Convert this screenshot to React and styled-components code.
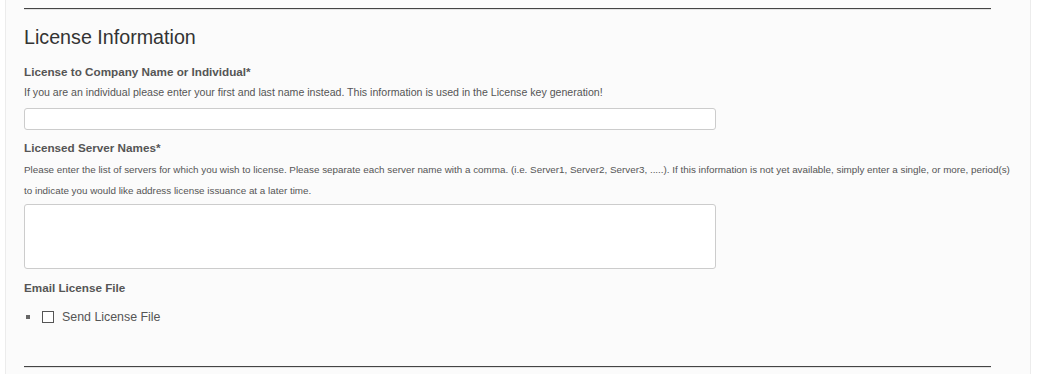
import React from 'react'
import {styled, createGlobalStyle} from 'styled-components'

const Global = createGlobalStyle`
  html, body {
    margin: 0;
    padding: 0;
    background: #ffffff;
    font-family: "Liberation Sans", Arial, sans-serif;
  }
`

const Page = () => {
  return (
    <PAGE>
      <Global />
      <PANEL>
        <RULE />
        <HEADING>License Information</HEADING>

        <FIELD $top="15px">
          <LABEL>License to Company Name or Individual*</LABEL>
          <HELP>If you are an individual please enter your first and last name instead. This information is used in the License key generation!</HELP>
          <INPUT type="text" />
        </FIELD>

        <FIELD $top="10px">
          <LABEL>Licensed Server Names*</LABEL>
          <HELP $tall>Please enter the list of servers for which you wish to license. Please separate each server name with a comma. (i.e. Server1, Server2, Server3, .....). If this information is not yet available, simply enter a single, or more, period(s) to indicate you would like address license issuance at a later time.</HELP>
          <AREA />
        </FIELD>

        <FIELD $top="11px">
          <LABEL>Email License File</LABEL>
          <LIST>
            <ITEM>
              <BOX type="checkbox" id="send" />
              <label htmlFor="send">Send License File</label>
            </ITEM>
          </LIST>
        </FIELD>

        <RULE $bottom />
      </PANEL>
    </PAGE>
  )
}

export default Page

const PAGE=styled.div`
    width: 100%;
    height: 374px;
    padding-left: 5px;
    box-sizing: border-box;
    background: #ffffff;
    overflow: hidden;
`
const PANEL=styled.div`
    width: 1026px;
    height: 100%;
    box-sizing: border-box;
    padding: 8px 0 0 18px;
    background-color: #fbfbfb;
    border-left: 1px solid #ececec;
    border-right: 1px solid #ececec;
    display: flex;
    flex-direction: column;
`
const RULE=styled.div`
    width: 967px;
    height: 1px;
    flex-shrink: 0;
    background: #444;
    border-bottom: 1px solid #e2e2e2;
    margin-top: ${p => p.$bottom ? '42px' : '0'};
`
const HEADING=styled.h2`
    margin: 15px 0 0;
    font-size: 19.7px;
    font-weight: normal;
    line-height: 24px;
    color: #333;
`
const FIELD=styled.div`
    display: flex;
    flex-direction: column;
    margin-top: ${p => p.$top};
`
const LABEL=styled.div`
    font-size: 11.7px;
    font-weight: bold;
    line-height: 16px;
    color: #555;
`
const HELP=styled.p`
    margin: ${p => p.$tall ? '3px 0 3px' : '5px 0 9px'};
    width: 990px;
    font-size: ${p => p.$tall ? '9.85px' : '10.6px'};
    line-height: ${p => p.$tall ? '21px' : '14px'};
    color: #555;
`
const INPUT=styled.input`
    width: 692px;
    height: 22px;
    box-sizing: border-box;
    margin: 0;
    border: 1px solid #cccccc;
    border-radius: 3px;
    background: #ffffff;
`
const AREA=styled.textarea`
    width: 692px;
    height: 65px;
    box-sizing: border-box;
    margin: 0;
    border: 1px solid #cccccc;
    border-radius: 3px;
    background: #ffffff;
    resize: none;
`
const LIST=styled.ul`
    margin: 14px 0 0;
    padding-left: 2px;
    list-style: none;
`
const ITEM=styled.li`
    display: flex;
    align-items: center;
    height: 14px;
    font-size: 12.4px;
    color: #555;
    &::before{
        content: "";
        width: 4px;
        height: 4px;
        background: #666;
        margin-right: 12px;
    }
`
const BOX=styled.input`
    appearance: none;
    width: 12px;
    height: 12px;
    margin: 0 8px 0 0;
    border: 1px solid #555;
    background: #fff;
`
